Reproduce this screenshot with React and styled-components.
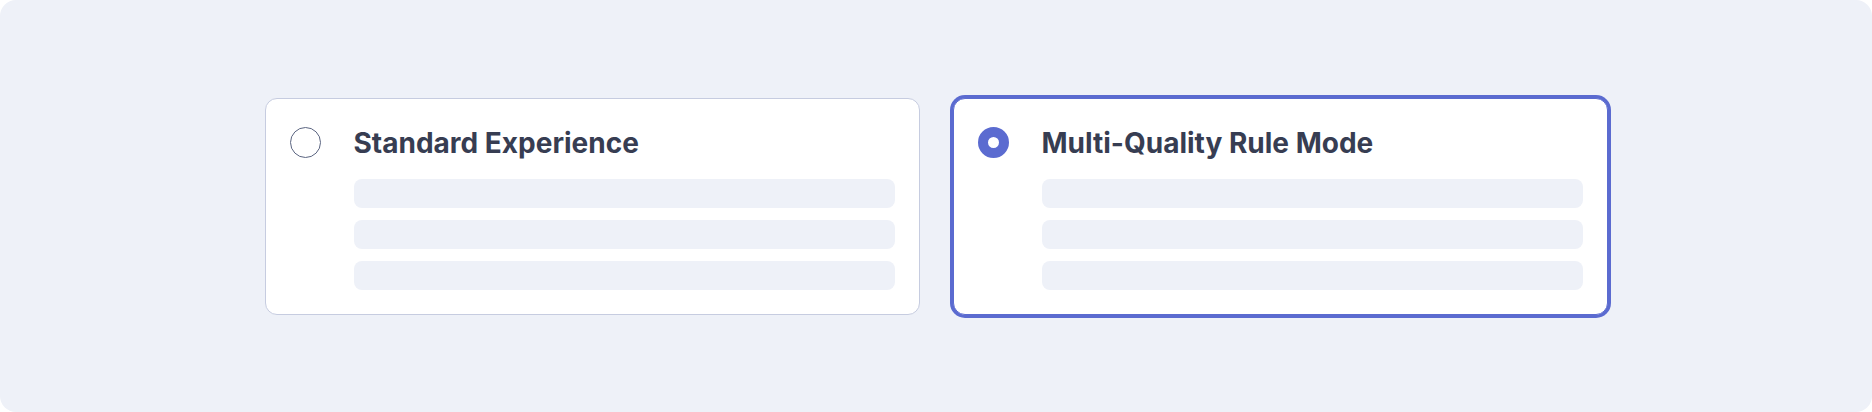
import styled, { createGlobalStyle } from "styled-components";

const GlobalStyle = createGlobalStyle`
  html, body {
    margin: 0;
    padding: 0;
    background: #ffffff;
  }
  body {
    font-family: Inter, "Noto Sans", "Liberation Sans", sans-serif;
  }
`;

const Stage = styled.div`
  width: 1872px;
  height: 412px;
  box-sizing: border-box;
  background-color: #eef1f8;
  border-radius: 16px;
  display: flex;
  justify-content: center;
  align-items: center;
  gap: 33px;
`;

const Card = styled.div`
  width: 655px;
  box-sizing: border-box;
  background-color: #ffffff;
  border: 1px solid ${(p) => (p.selected ? "#5b6bd0" : "#c6cce0")};
  box-shadow: ${(p) => (p.selected ? "0 0 0 3px #5b6bd0" : "none")};
  border-radius: 12px;
  padding: 24px;
  display: grid;
  grid-template-columns: 32px 1fr;
  column-gap: 32px;
`;

const Radio = styled.span`
  width: 31px;
  height: 31px;
  box-sizing: border-box;
  border-radius: 50%;
  border: ${(p) => (p.checked ? "10px solid #5b6bd0" : "1.7px solid #5b6581")};
  background: #ffffff;
  align-self: center;
`;

const Title = styled.div`
  font-size: 28px;
  font-weight: 700;
  line-height: 40px;
  color: #373d52;
  letter-spacing: 0;
`;

const Lines = styled.div`
  grid-column: 2;
  display: flex;
  flex-direction: column;
  gap: 12px;
  margin-top: 16px;
`;

const Line = styled.div`
  height: 29px;
  border-radius: 8px;
  background-color: #eef1f8;
`;

function Option({ title, selected }) {
  return (
    <Card selected={selected}>
      <Radio checked={selected} />
      <Title>{title}</Title>
      <Lines>
        <Line />
        <Line />
        <Line />
      </Lines>
    </Card>
  );
}

export default function App() {
  return (
    <>
      <GlobalStyle />
      <Stage>
        <Option title="Standard Experience" />
        <Option title="Multi-Quality Rule Mode" selected />
      </Stage>
    </>
  );
}
